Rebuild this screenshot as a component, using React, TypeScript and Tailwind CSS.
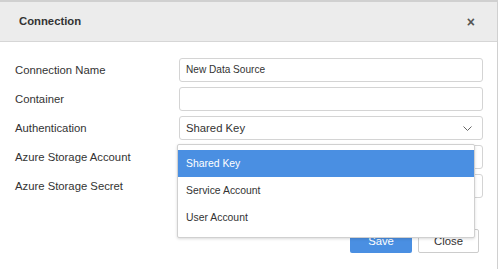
import React from 'react'

const labels = [
  'Connection Name',
  'Container',
  'Authentication',
  'Azure Storage Account',
  'Azure Storage Secret'
]

const options = ['Shared Key', 'Service Account', 'User Account']

function ChevronDown() {
  return (
    <svg width="9" height="5" viewBox="0 0 9 5" fill="none">
      <path d="M0.5 0.5l4 4 4-4" stroke="#666" strokeWidth="1" />
    </svg>
  )
}

function Field({ index }: { index: number }) {
  if (index === 0) {
    return (
      <div className="h-[24px] w-full rounded-[3px] border border-[#d4d4d4] bg-white px-[6px] flex items-center text-[10.1px] text-[#333]">
        New Data Source
      </div>
    )
  }
  if (index === 2) {
    return (
      <div className="relative">
        <div className="h-[24px] w-full rounded-[3px] border border-[#d4d4d4] bg-white pl-[6px] pr-[10px] flex items-center justify-between text-[11.3px] text-[#333]">
          <span>Shared Key</span>
          <ChevronDown />
        </div>
        {/* open dropdown */}
        <div className="absolute left-[-2px] top-[28px] z-10 w-[298px] rounded-[2px] border border-[#d0d0d0] bg-white pt-[5px] pb-[6px] shadow-[0_1px_3px_rgba(0,0,0,0.15)]">
          {options.map((o, i) => (
            <div
              key={o}
              className={
                i === 0
                  ? 'h-[27px] flex items-center pt-[1px] px-[8px] text-[10.4px] bg-[#4a8fe2] text-white'
                  : 'h-[27px] flex items-center pt-[1px] px-[8px] text-[10.4px] text-[#333]'
              }
            >
              {o}
            </div>
          ))}
        </div>
      </div>
    )
  }
  return <div className="h-[24px] w-full rounded-[3px] border border-[#d4d4d4] bg-white" />
}

export default function App() {
  return (
    <div
      className="h-[269px] w-[500px] bg-white overflow-hidden"
      style={{ fontFamily: '"Liberation Sans", Arial, sans-serif' }}
    >
      <div className="h-full w-[498px] border-t-2 border-r border-[#d0d0d0] bg-white">
        <div className="h-[40px] bg-[#ececec] border-b border-[#d6d6d6] flex items-center justify-between pl-[19px] pr-[22px]">
          <span className="text-[11.3px] font-bold text-[#333]">Connection</span>
          <span className="text-[14px] font-bold text-[#555] leading-none">×</span>
        </div>
        <div className="pt-[16px] pl-[15px] pr-[14px]">
          <div className="grid grid-cols-[164px_1fr] gap-y-[5px]">
            {labels.map((l, i) => (
              <React.Fragment key={l}>
                <div className="h-[24px] flex items-center pt-[1px] text-[11.3px] text-[#333]">{l}</div>
                <Field index={i} />
              </React.Fragment>
            ))}
          </div>
          <div className="mt-[31px] flex justify-end gap-[6px] pr-[4px]">
            <button className="h-[24px] w-[62px] rounded-[2px] bg-[#4a8fe2] text-white text-[11.3px]">
              Save
            </button>
            <button className="h-[24px] w-[61px] rounded-[2px] border border-[#ccc] bg-white text-[#333] text-[11.3px]">
              Close
            </button>
          </div>
        </div>
      </div>
    </div>
  )
}
